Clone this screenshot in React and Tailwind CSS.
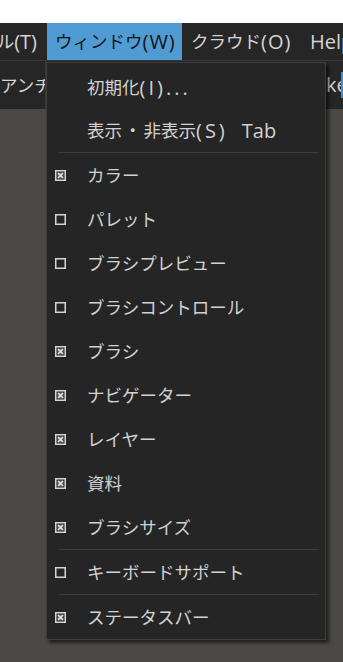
import React from 'react'

const font = { fontFamily: '"Open Sans", "Noto Sans CJK JP", sans-serif' }

// latin part of a label is drawn a bit larger, like the UI font in the picture
const L = ({ children, className = '' }) => (
  <span className={`text-[20px] leading-none ${className}`}>{children}</span>
)

const CheckBox = ({ checked }) => (
  <svg width="11" height="11" viewBox="0 0 11 11" className="shrink-0">
    <rect x="0.75" y="0.75" width="9.5" height="9.5" fill="none" stroke="#d6d6d6" strokeWidth="1.5" />
    {checked && (
      <>
        <rect x="2.5" y="2.5" width="6" height="6" fill="#6a6a6a" />
        <path d="M3 3 L8 8 M8 3 L3 8" stroke="#e4e4e4" strokeWidth="1.6" />
      </>
    )}
  </svg>
)

const Sep = () => <div className="h-px ml-[12px] mr-[6px] bg-[#3d3d3d]" />

const Item = ({ children, checked, box = true, h = 'h-[44px]' }) => (
  <div className={`flex items-center ${h}`}>
    <div className="w-[40px] pl-[8px] flex items-center">
      {box && <CheckBox checked={checked} />}
    </div>
    <div className="flex items-center text-[17.5px] text-[#d2d2d2] whitespace-pre">{children}</div>
  </div>
)

export default function App() {
  return (
    <div className="relative w-[343px] h-[662px] overflow-hidden bg-[#4a4947]" style={font}>
      <div className="h-[23px] bg-white" />

      {/* menu bar */}
      <div className="flex h-[37px] bg-[#262626] text-[17.5px] text-[#d4d4d4] whitespace-nowrap">
        <div className="w-[47px] shrink-0 flex items-center justify-end pr-[10px]">ル<L>(T)</L></div>
        <div className="w-[135px] shrink-0 flex items-center pl-[8px] bg-[#519bd3] text-[#141414]">ウィンドウ<L className="tracking-[1px]">(W)</L></div>
        <div className="w-[128px] shrink-0 flex items-center pl-[9px]">クラウド<L className="tracking-[1px]">(O)</L></div>
        <div className="shrink-0 flex items-center"><L>Help</L></div>
      </div>
      <div className="h-px bg-[#3a3a3a]" />

      {/* tool row */}
      <div className="flex h-[48px] bg-[#262626] text-[17.5px] text-[#d4d4d4] whitespace-nowrap">
        <div className="w-[45px] shrink-0 flex items-center overflow-hidden">アンチ</div>
        <div className="w-px shrink-0 bg-[#3a3a3a]" />
        <div className="flex-1" />
        <div className="w-[15px] shrink-0 flex items-center overflow-hidden"><L>ke</L></div>
        <div className="w-[2px] shrink-0 my-[11px] bg-[#3a8fd6]" />
      </div>

      {/* dropdown */}
      <div className="absolute left-[46px] top-[62px] w-[280px] bg-[#252525] border border-[#3e3e3e] pt-[3px] shadow-[3px_3px_3px_rgba(0,0,0,0.55)]">
        <Item box={false} h="h-[43px]">初期化<L className="tracking-[3px]">(I)...</L></Item>
        <Item box={false} h="h-[43px]">
          表示<span className="mx-[2px]">・</span>非表示<L className="tracking-[3px]">(S)</L>
          <L className="ml-[14px]">Tab</L>
        </Item>
        <Sep />
        <Item checked>カラー</Item>
        <Item>パレット</Item>
        <Item>ブラシプレビュー</Item>
        <Item>ブラシコントロール</Item>
        <Item checked>ブラシ</Item>
        <Item checked>ナビゲーター</Item>
        <Item checked>レイヤー</Item>
        <Item checked>資料</Item>
        <Item checked>ブラシサイズ</Item>
        <Sep />
        <Item>キーボードサポート</Item>
        <Sep />
        <Item checked>ステータスバー</Item>
      </div>
    </div>
  )
}
